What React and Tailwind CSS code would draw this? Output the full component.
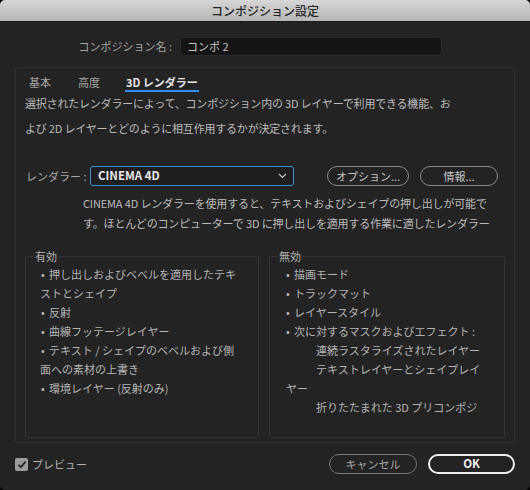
import React from "react";

const F = "font-['Noto_Sans_CJK_JP',sans-serif]";

function Fieldset({ legend, children, className = "", pad = "" }) {
  return (
    <fieldset className={`border border-[#353535] rounded-[2px] h-[189px] ${className}`}>
      <legend className="ml-[7px] px-[2px] text-[11px] leading-[14px] text-[#b0b0b0]">{legend}</legend>
      <div className={`pt-[2px] text-[11px] leading-[19px] text-[#b4b4b4] whitespace-nowrap ${pad}`}>{children}</div>
    </fieldset>
  );
}

function B({ children }) {
  return (
    <div className="flex">
      <span className="w-[8px]">•</span>
      <span>{children}</span>
    </div>
  );
}

export default function App() {
  return (
    <div className={`w-[530px] h-[490px] bg-black ${F}`}>
      <div className="h-full flex flex-col rounded-[5px] overflow-hidden bg-[#232323]">
        <div className="h-[22px] shrink-0 flex items-center justify-center bg-gradient-to-b from-[#d6d6d6] to-[#b6b6b6] border-b border-[#1a1a1a] text-[12px] text-[#262626] font-medium">
          コンポジション設定
        </div>
        <div className="px-[15px] flex flex-col">
          <div className="mt-[15px] flex items-center h-[19px]">
            <div className="w-[161px] text-right text-[11px] text-[#a6a6a6] pr-[4px]">コンポジション名 :</div>
            <div className="ml-[4px] w-[262px] h-[19px] rounded-[3px] bg-[#141414] border border-[#2a2a2a] flex items-center pl-[6px] text-[11px] text-[#c8c8c8]">
              コンポ 2
            </div>
          </div>

          <div className="mt-[11px] h-[376px] border border-[#313131] rounded-[2px] flex flex-col">
            <div className="flex pl-[13px] text-[11px] leading-[14px] h-[24px]">
              <div className="pt-[7px] text-[#a4a4a4]">基本</div>
              <div className="pt-[7px] ml-[27px] text-[#a4a4a4]">高度</div>
              <div className="pt-[7px] ml-[25px] px-[1px] text-[#e6e6e6] font-semibold border-b-2 border-[#2f8ef0]">3D レンダラー</div>
            </div>
            <div className="mt-[-1px] pl-[9px] text-[11px] leading-[25px] tracking-[-0.2px] text-[#bcbcbc] whitespace-nowrap">
              選択されたレンダラーによって、コンポジション内の 3D レイヤーで利用できる機能、お
              <br />
              よび 2D レイヤーとどのように相互作用するかが決定されます。
            </div>

            <div className="mt-[25px] flex items-center pl-[10px] h-[20px]">
              <div className="w-[64px] text-[11px] text-[#a6a6a6]">レンダラー :</div>
              <div className="w-[204px] h-[20px] rounded-[3px] border border-[#3a8be0] bg-[#1e1e1e] flex items-center pl-[7px] pr-[6px] justify-between">
                <span className="text-[11.5px] font-semibold text-[#e8e8e8]">CINEMA 4D</span>
                <svg width="9" height="6" viewBox="0 0 9 6" fill="none">
                  <path d="M1 1l3.5 3.5L8 1" stroke="#c8c8c8" strokeWidth="1.2" />
                </svg>
              </div>
              <div className="ml-[33px] w-[82px] h-[20px] rounded-full border-[1.5px] border-[#8a8a8a] flex items-center justify-center text-[11px] text-[#c4c4c4]">
                オプション...
              </div>
              <div className="ml-[11px] w-[78px] h-[20px] rounded-full border-[1.5px] border-[#8a8a8a] flex items-center justify-center text-[11px] text-[#c4c4c4]">
                情報...
              </div>
            </div>

            <div className="mt-[7px] pl-[67px] text-[11px] leading-[20px] tracking-[-0.15px] text-[#bcbcbc] whitespace-nowrap">
              CINEMA 4D レンダラーを使用すると、テキストおよびシェイプの押し出しが可能で
              <br />
              す。ほとんどのコンピューターで 3D に押し出しを適用する作業に適したレンダラー
            </div>

            <div className="mt-[16px] flex pl-[9px] gap-[10px]">
              <Fieldset legend="有効" className="w-[234px]" pad="pl-[15px]">
                <B>押し出しおよびベベルを適用したテキ</B>
                <div className="-ml-[1px]">ストとシェイプ</div>
                <B>反射</B>
                <B>曲線フッテージレイヤー</B>
                <B>テキスト / シェイプのベベルおよび側</B>
                <div className="-ml-[1px]">面への素材の上書き</div>
                <B>環境レイヤー (反射のみ)</B>
              </Fieldset>
              <Fieldset legend="無効" className="w-[236px]" pad="pl-[16px]">
                <B>描画モード</B>
                <B>トラックマット</B>
                <B>レイヤースタイル</B>
                <B>次に対するマスクおよびエフェクト :</B>
                <div className="pl-[30px]">連続ラスタライズされたレイヤー</div>
                <div className="pl-[30px]">テキストレイヤーとシェイプレイ</div>
                <div>ヤー</div>
                <div className="pl-[30px]">折りたたまれた 3D プリコンポジ</div>
              </Fieldset>
            </div>
          </div>

          <div className="mt-[11px] flex items-center h-[20px]">
            <div className="w-[13px] h-[13px] rounded-[2px] bg-[#9c9c9c] flex items-center justify-center">
              <svg width="10" height="9" viewBox="0 0 10 9" fill="none">
                <path d="M1.5 4.8l2.4 2.4L8.6 1.6" stroke="#262626" strokeWidth="1.8" />
              </svg>
            </div>
            <span className="ml-[4px] text-[11px] text-[#b4b4b4]">プレビュー</span>
            <div className="ml-auto w-[88px] h-[20px] rounded-full border-[1.5px] border-[#7a7a7a] flex items-center justify-center text-[11px] text-[#a8a8a8]">
              キャンセル
            </div>
            <div className="ml-[11px] w-[87px] h-[20px] rounded-full border-2 border-[#ececec] flex items-center justify-center text-[11.5px] font-semibold text-[#f2f2f2]">
              OK
            </div>
          </div>
        </div>
      </div>
    </div>
  );
}
